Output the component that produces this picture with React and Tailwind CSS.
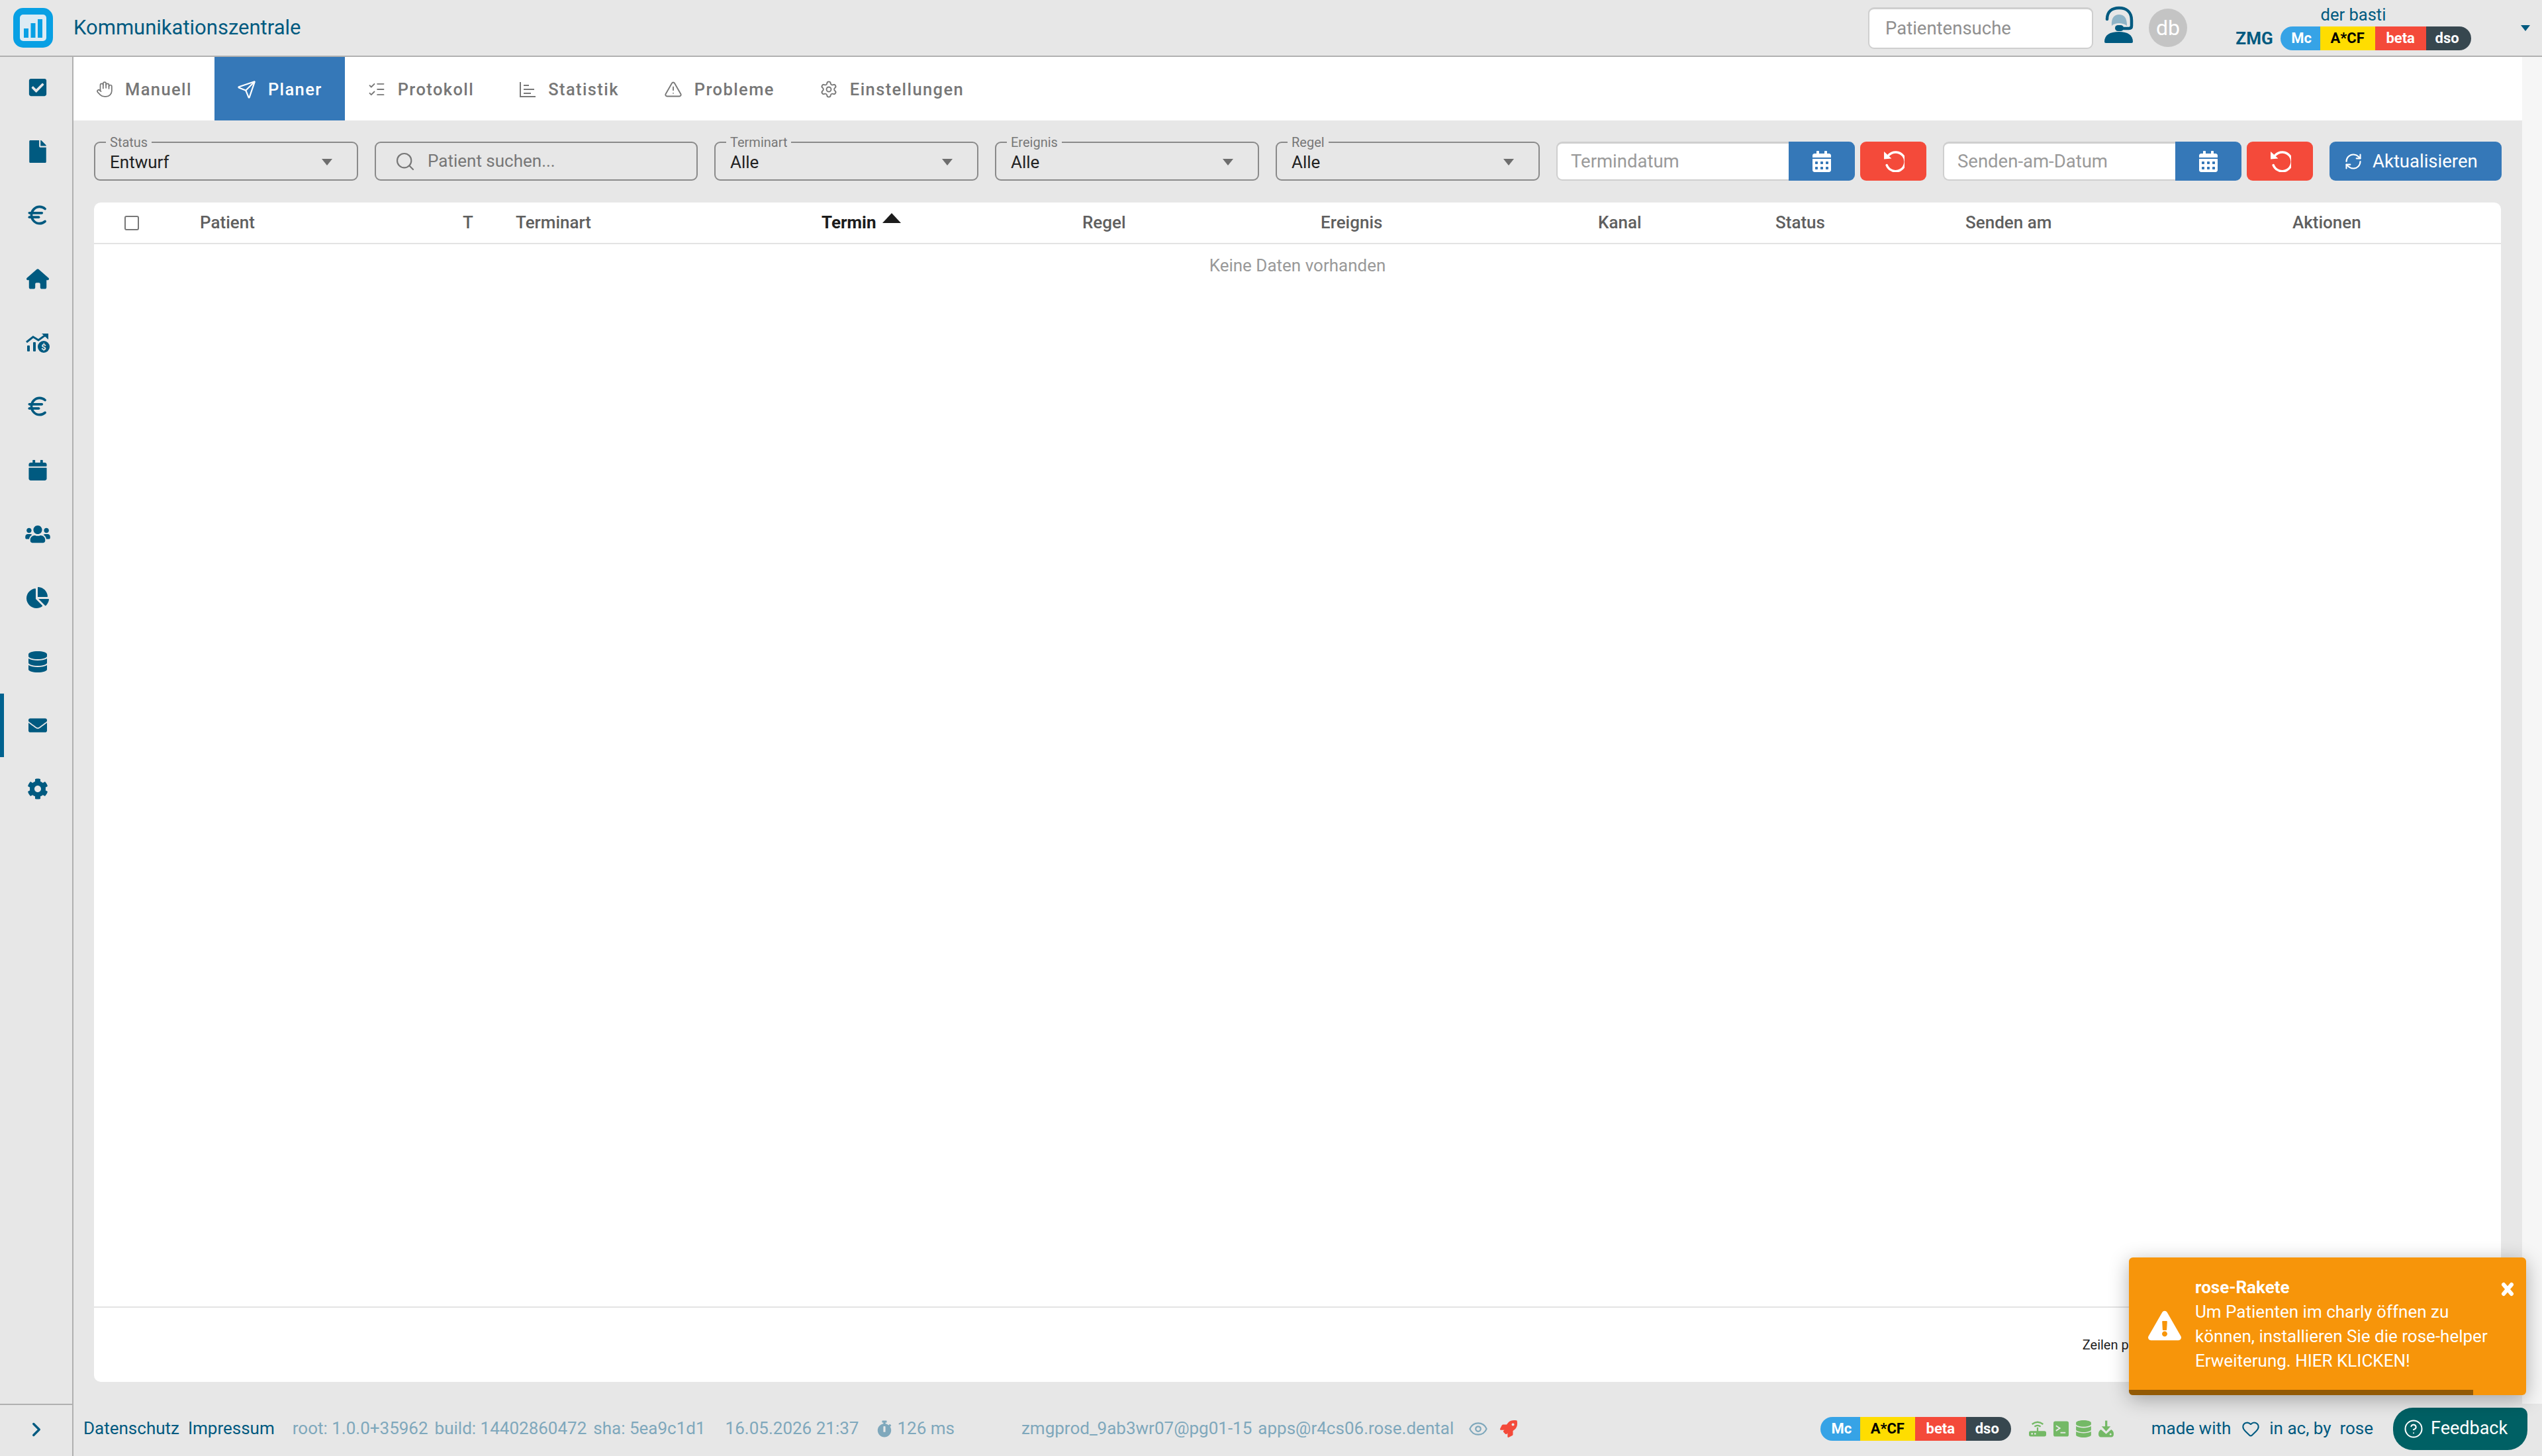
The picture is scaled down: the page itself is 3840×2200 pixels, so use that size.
import React from "react";
import { Hand, Send, ListChecks, TriangleAlert, Settings, Search, RefreshCw, Heart, Eye, CircleHelp, ChevronRight, Euro } from "lucide-react";
import {
  FaCheckSquare,
  FaFile,
  FaCalendar,
  FaUsers,
  FaChartPie,
  FaDatabase,
  FaEnvelope,
  FaCog,
  FaCalendarAlt,
  FaRocket,
  FaStopwatch,
  FaExclamationTriangle,
} from "react-icons/fa";
import { FaHouse } from "react-icons/fa6";

function Logo() {
  return (
    <svg viewBox="0 0 60 60" className="w-[60px] h-[60px] shrink-0">
      <rect width="60" height="60" rx="15" fill="#08a0e4" />
      <rect x="10" y="10" width="40" height="40" rx="5" fill="#dcebf4" />
      <rect x="16" y="31" width="7" height="14" fill="#08a0e4" />
      <rect x="26.5" y="23" width="7" height="22" fill="#08a0e4" />
      <rect x="37" y="17" width="7" height="28" fill="#08a0e4" />
    </svg>
  );
}

function Support() {
  return (
    <svg viewBox="0 0 44 56" className="w-[44px] h-[56px] shrink-0">
      <path d="M11 30 C10 18 15 13 22 13 C30 13 34 18 34 30 C30 27 26 26 22 26 C18 26 14 27 11 30 Z" fill="#8fb4c7" />
      <path d="M4 20 C4 8 12 3 22 3 C33 3 41 9 41 22 V30 Q41 34 37 34 H26" fill="none" stroke="#005a80" strokeWidth="4.5" strokeLinecap="round" />
      <rect x="16" y="29" width="13" height="9" rx="4.5" fill="#005a80" />
      <path d="M0 54 C0 44 8 39 22 39 C35 39 43 44 43 54 Q43 56 41 56 H2 Q0 56 0 54 Z" fill="#005a80" />
    </svg>
  );
}

function TrendIcon() {
  return (
    <svg viewBox="0 0 36 30" className="w-[36px] h-[30px]">
      <path d="M1 14 L11 6 L19 11 L30 3" fill="none" stroke="#005a80" strokeWidth="3" />
      <path d="M24 1 H34 V10 Z" fill="#005a80" />
      <rect x="2" y="19" width="4" height="9" rx="1" fill="#005a80" />
      <rect x="11" y="14" width="4" height="14" rx="1" fill="#005a80" />
      <circle cx="27" cy="21" r="9" fill="#005a80" />
      <text x="27" y="25.5" textAnchor="middle" fontSize="13" fontWeight="700" fill="#e7e7e7" fontFamily="Roboto, sans-serif">$</text>
    </svg>
  );
}

function UndoIcon() {
  return (
    <svg viewBox="0 0 32 32" className="w-[33px] h-[33px]">
      <path d="M8 7 A14 14 0 1 1 5 22" transform="translate(1 0)" fill="none" stroke="white" strokeWidth="3.4" strokeLinecap="round" />
      <path d="M2 2 L13 12 L2 13 Z" fill="white" />
    </svg>
  );
}

function StatIcon() {
  return (
    <svg viewBox="0 0 26 26" className="w-[26px] h-[26px]" fill="none" stroke="#777" strokeWidth="2">
      <path d="M2 2 V24 H25" />
      <path d="M7 7 H15 M7 13 H23 M7 19 H18" />
    </svg>
  );
}

function RouterIcon() {
  return (
    <svg viewBox="0 0 28 26" className="w-[26px] h-[25px]" fill="none" stroke="#74b966" strokeWidth="2.4">
      <path d="M5 6 Q14 -1 23 6 M9 10 Q14 6 19 10 M14 11 V18" />
      <rect x="0" y="17" width="28" height="9" rx="3" fill="#74b966" stroke="none" />
      <circle cx="5" cy="21.5" r="1.4" fill="#e7e7e7" stroke="none" />
      <circle cx="10" cy="21.5" r="1.4" fill="#e7e7e7" stroke="none" />
    </svg>
  );
}

function TerminalIcon() {
  return (
    <svg viewBox="0 0 24 24" className="w-[23px] h-[24px]" fill="none">
      <rect width="24" height="24" rx="3" fill="#74b966" />
      <path d="M4 7 L10 11 L4 15" stroke="#e7e7e7" strokeWidth="2" />
      <path d="M11 18 H19" stroke="#e7e7e7" strokeWidth="2" />
    </svg>
  );
}

function DriveDown() {
  return (
    <svg viewBox="0 0 24 26" className="w-[23px] h-[26px]" fill="#74b966">
      <rect x="10.5" y="0" width="3.4" height="13" />
      <path d="M5 9 H19 L12 17 Z" />
      <path d="M4 14 L12 21 L20 14 Q24 16 24 21 Q24 26 20 26 H4 Q0 26 0 21 Q0 16 4 14 Z" />
      <circle cx="19" cy="21.5" r="1.4" fill="#e7e7e7" />
    </svg>
  );
}

function CloseIcon() {
  return (
    <svg viewBox="0 0 20 22" className="w-[20px] h-[22px]" fill="none" stroke="white" strokeWidth="6" strokeLinecap="round">
      <path d="M4 4 L16 18 M16 4 L4 18" />
    </svg>
  );
}

function Badges() {
  return (
    <div className="flex h-[36px] rounded-full overflow-hidden text-[22px] font-bold leading-[36px] text-center shrink-0">
      <span className="w-[60px] pl-[4px] bg-[#36a3e6] text-white">Mc</span>
      <span className="w-[83px] bg-[#ffdd00] text-black">A*CF</span>
      <span className="w-[77px] bg-[#f44a3a] text-white">beta</span>
      <span className="w-[68px] pr-[4px] bg-[#37474f] text-white">dso</span>
    </div>
  );
}

function FloatSelect({ label, value, className }) {
  return (
    <div className={`relative h-[59px] border-2 border-[#8a8a8a] rounded-[9px] flex items-center justify-between pl-[22px] pr-[37px] pt-[2px] shrink-0 ${className}`}>
      <span className="absolute left-[16px] -top-[12px] px-[6px] bg-[#e7e7e7] text-[20px] leading-[22px] text-[#777]">{label}</span>
      <span className="text-[26px] text-[#222] mt-[1px]">{value}</span>
      <div className="w-0 h-0 border-x-[8px] border-x-transparent border-t-[10px] border-t-[#6e6e6e]" />
    </div>
  );
}

function DateFilter({ placeholder }) {
  return (
    <div className="flex h-[59px] shrink-0">
      <div className="w-[351px] bg-white border-2 border-t-[3px] border-r-0 border-[#cfcfcf] rounded-l-[9px] flex items-center pl-[20px] text-[27.5px] text-[#9a9a9a]">
        {placeholder}
      </div>
      <button className="w-[100px] bg-[#3578b8] rounded-r-[9px] flex items-center justify-center">
        <FaCalendarAlt className="text-white w-[28px] h-[32px]" />
      </button>
      <button className="w-[100px] ml-[8px] bg-[#f44a3a] rounded-[9px] flex items-center justify-center">
        <UndoIcon />
      </button>
    </div>
  );
}

const navItems = [
  { icon: <FaCheckSquare className="w-[30px] h-[30px]" /> },
  { icon: <FaFile className="w-[26px] h-[34px]" /> },
  { icon: <Euro className="w-[38px] h-[38px]" strokeWidth={2.3} /> },
  { icon: <FaHouse className="w-[34px] h-[31px]" /> },
  { icon: <TrendIcon /> },
  { icon: <Euro className="w-[38px] h-[38px]" strokeWidth={2.3} /> },
  { icon: <FaCalendar className="w-[28px] h-[31px]" /> },
  { icon: <FaUsers className="w-[40px] h-[30px]" /> },
  { icon: <FaChartPie className="w-[34px] h-[34px]" /> },
  { icon: <FaDatabase className="w-[28px] h-[32px]" /> },
  { icon: <FaEnvelope className="w-[32px] h-[28px]" />, active: true },
  { icon: <FaCog className="w-[32px] h-[32px]" /> },
];

const tabs = [
  { label: "Manuell", icon: <Hand className="w-[26px] h-[26px]" strokeWidth={1.6} /> },
  { label: "Planer", icon: <Send className="w-[29px] h-[29px]" strokeWidth={1.8} />, active: true },
  { label: "Protokoll", icon: <ListChecks className="w-[28px] h-[28px]" strokeWidth={1.6} /> },
  { label: "Statistik", icon: <StatIcon /> },
  { label: "Probleme", icon: <TriangleAlert className="w-[28px] h-[28px]" strokeWidth={1.6} /> },
  { label: "Einstellungen", icon: <Settings className="w-[28px] h-[28px]" strokeWidth={1.6} /> },
];

const columns = [
  { label: "Patient", w: "w-[397px]" },
  { label: "T", w: "w-[80px]" },
  { label: "Terminart", w: "w-[462px]" },
  { label: "Termin", w: "w-[394px]", sorted: true },
  { label: "Regel", w: "w-[360px]" },
  { label: "Ereignis", w: "w-[419px]" },
  { label: "Kanal", w: "w-[268px]" },
  { label: "Status", w: "w-[287px]" },
  { label: "Senden am", w: "w-[494px]" },
  { label: "Aktionen", w: "w-[200px]" },
];

export default function App() {
  return (
    <div className="relative w-[3840px] h-[2200px] flex flex-col overflow-hidden bg-[#e7e7e7] font-[Roboto,sans-serif]">
      {/* top bar */}
      <header className="h-[86px] shrink-0 flex items-center border-b-2 border-[#b0b0b0] pl-[20px]">
        <Logo />
        <span className="ml-[31px] text-[31px] text-[#005a80]">Kommunikationszentrale</span>
        <div className="ml-auto flex items-center">
          <div className="w-[340px] h-[63px] bg-white border-2 border-t-[3px] border-[#cfcfcf] rounded-[9px] flex items-center pl-[24px] text-[27.5px] text-[#8f8f8f]">
            Patientensuche
          </div>
          <div className="ml-[17px] mb-[10px]">
            <Support />
          </div>
          <div className="ml-[23px] w-[58px] h-[58px] rounded-full bg-[#c4c4c4] text-white text-[32px] flex items-center justify-center">
            db
          </div>
          <div className="ml-[73px] flex flex-col items-center w-[356px]">
            <span className="text-[25.5px] leading-[30px] text-[#005a80] mb-[2px]">der basti</span>
            <div className="flex items-center gap-[11px]">
              <span className="text-[26px] font-bold text-[#005a80]">ZMG</span>
              <Badges />
            </div>
          </div>
          <div className="w-[107px] flex justify-end pr-[18px]">
            <div className="w-0 h-0 border-x-[7px] border-x-transparent border-t-[9px] border-t-[#005a80]" />
          </div>
        </div>
      </header>

      <div className="flex-1 flex min-h-0">
        {/* side nav */}
        <nav className="w-[111px] shrink-0 border-r-2 border-[#b0b0b0] text-[#005a80]">
          <div className="flex flex-col -mt-[2px]">
            {navItems.map((item, i) => (
              <div key={i} className="h-[96.4px] flex items-center justify-center pl-[4px] relative">
                {item.active && <span className="absolute left-0 top-0 bottom-0 w-[6px] bg-[#00628f]" />}
                {item.icon}
              </div>
            ))}
          </div>
        </nav>

        <main className="flex-1 min-w-0 flex">
          <div className="flex-1 min-w-0 flex flex-col">
            <div className="h-[96px] shrink-0 bg-white flex">
              {tabs.map((t) => (
                <div
                  key={t.label}
                  className={`flex items-center gap-[18px] px-[34px] pt-[2px] text-[25.5px] font-medium tracking-[1.4px] ${t.active ? "bg-[#3578b8] text-white" : "text-[#777]"}`}
                >
                  {t.icon}
                  {t.label}
                </div>
              ))}
            </div>

            <div className="flex-1 min-h-0 flex flex-col pt-[32px] pb-[33px] pl-[31px] pr-[32px]">
              <div className="flex items-center gap-[25px]">
                <FloatSelect label="Status" value="Entwurf" className="w-[399px]" />
                <div className="h-[59px] w-[488px] shrink-0 border-2 border-[#8a8a8a] rounded-[9px] flex items-center pl-[28px] gap-[18px] text-[26px] text-[#777]">
                  <Search className="w-[32px] h-[32px]" strokeWidth={1.6} />
                  Patient suchen...
                </div>
                <FloatSelect label="Terminart" value="Alle" className="w-[399px]" />
                <FloatSelect label="Ereignis" value="Alle" className="w-[399px]" />
                <FloatSelect label="Regel" value="Alle" className="w-[399px]" />
                <DateFilter placeholder="Termindatum" />
                <DateFilter placeholder="Senden-am-Datum" />
                <button className="h-[59px] w-[260px] shrink-0 bg-[#3578b8] rounded-[9px] text-white text-[27.5px] flex items-center pl-[22px] gap-[15px]">
                  <RefreshCw className="w-[28px] h-[28px]" strokeWidth={1.8} />
                  Aktualisieren
                </button>
              </div>

              <div className="mt-[33px] flex-1 min-h-0 bg-white rounded-[10px] flex flex-col">
                <div className="h-[63px] shrink-0 border-b-2 border-[#e3e3e3] flex items-center text-[26px] font-medium text-[#5f5f5f]">
                  <div className="w-[160px] pl-[46px]">
                    <div className="w-[22px] h-[22px] rounded-[3px] border-2 border-[#777]" />
                  </div>
                  {columns.map((c) => (
                    <div key={c.label} className={`${c.w} shrink-0 flex items-center ${c.sorted ? "text-[#1c1c1c] font-bold" : ""}`}>
                      {c.label}
                      {c.sorted && (
                        <div className="ml-[10px] mb-[14px] w-0 h-0 border-x-[14px] border-x-transparent border-b-[15px] border-b-[#1c1c1c]" />
                      )}
                    </div>
                  ))}
                </div>
                <div className="flex-1 pt-[17px] text-center text-[26px] leading-[30px] text-[#999]">
                  Keine Daten vorhanden
                </div>
                <div className="h-[114px] shrink-0 border-t-2 border-[#e3e3e3] flex items-center justify-end pr-[490px] text-[20px] text-[#222]">
                  Zeilen pro Seite:
                </div>
              </div>
            </div>
          </div>
          <div className="w-[30px] shrink-0 bg-[#f6f6f6]" />
        </main>
      </div>

      {/* footer */}
      <footer className="h-[79px] shrink-0 flex items-center text-[26px] text-[#7fa8bc]">
        <div className="w-[111px] h-full shrink-0 border-t-2 border-r-2 border-[#b0b0b0] flex items-center justify-center pb-[4px] text-[#005a80]">
          <ChevronRight className="w-[34px] h-[34px]" strokeWidth={2.4} />
        </div>
        <div className="flex-1 min-w-0 flex items-center pb-[4px]">
          <span className="ml-[15px] text-[#005a80]">Datenschutz</span>
          <span className="ml-[13px] text-[#005a80]">Impressum</span>
          <span className="ml-[27px]">root: 1.0.0+35962</span>
          <span className="ml-[10px]">build: 14402860472</span>
          <span className="ml-[10px]">sha: 5ea9c1d1</span>
          <span className="ml-[30px]">16.05.2026 21:37</span>
          <FaStopwatch className="ml-[28px] w-[22px] h-[26px]" />
          <span className="ml-[8px]">126 ms</span>
          <span className="ml-[101px]">zmgprod_9ab3wr07@pg01-15</span>
          <span className="ml-[9px]">apps@r4cs06.rose.dental</span>
          <Eye className="ml-[22px] w-[30px] h-[30px]" strokeWidth={1.8} />
          <FaRocket className="ml-[18px] w-[26px] h-[26px] text-[#f44a3a]" />
          <div className="ml-auto flex items-center">
            <Badges />
            <div className="ml-[27px] flex items-center gap-[11px]">
              <RouterIcon />
              <TerminalIcon />
              <FaDatabase className="w-[23px] h-[26px] text-[#74b966]" />
              <DriveDown />
            </div>
            <span className="ml-[57px] text-[#005a80]">made with</span>
            <Heart className="ml-[16px] w-[28px] h-[28px] text-[#005a80]" strokeWidth={1.8} />
            <span className="ml-[14px] text-[#005a80]">in ac, by&nbsp; rose</span>
            <button className="ml-[30px] mr-[22px] w-[203px] h-[64px] bg-[#006064] text-white rounded-[30px] rounded-tr-[10px] flex items-center pl-[16px] gap-[11px] text-[27px]">
              <CircleHelp className="w-[30px] h-[30px]" strokeWidth={1.6} />
              Feedback
            </button>
          </div>
        </div>
      </footer>

      {/* toast */}
      <div className="absolute left-[3216px] top-[1900px] w-[600px] h-[208px] bg-[#f7950a] rounded-[6px] shadow-[0_6px_30px_rgba(0,0,0,0.3)] text-white overflow-hidden">
        <FaExclamationTriangle className="absolute left-[29px] top-[80px] w-[50px] h-[46px]" />
        <div className="absolute right-[18px] top-[37px]">
          <CloseIcon />
        </div>
        <div className="absolute left-[100px] top-[27px] text-[26px] leading-[37px] w-[450px]">
          <div className="font-bold">rose-Rakete</div>
          Um Patienten im charly öffnen zu können, installieren Sie die rose-helper Erweiterung. HIER KLICKEN!
        </div>
        <div className="absolute left-0 bottom-0 h-[8px] w-[520px] bg-[#935a05]" />
      </div>
    </div>
  );
}
